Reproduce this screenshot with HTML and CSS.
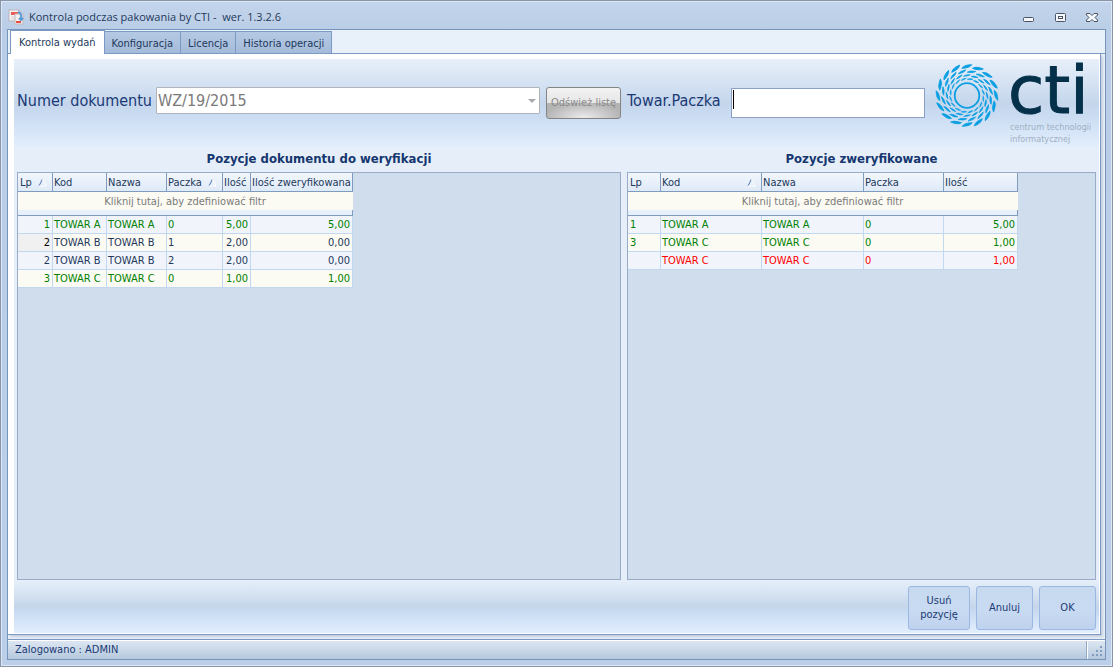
FILE: index.html
```html
<!DOCTYPE html>
<html lang="pl">
<head>
<meta charset="utf-8">
<title>Kontrola podczas pakowania by CTI</title>
<link rel="stylesheet" href="styles.css">
</head>
<body>
<div class="window">
  <header class="titlebar">
    <svg class="app-icon" width="16" height="16" viewBox="0 0 16 16">
      <rect x="1" y="1" width="10" height="11" fill="#f4f4f6" stroke="#b9b4b8"/>
      <rect x="3" y="3" width="7" height="3" fill="#ea5a52"/>
      <path d="M3 8h5M3 10h4" stroke="#d5cdd0"/>
      <rect x="7" y="5" width="8" height="10" fill="#f2eff0" stroke="#c3b9b9"/>
      <rect x="8" y="12" width="5" height="2" fill="#ee4b44"/>
      <path d="M10 3q4 1 3 7M11 9l2 2 2-2" fill="none" stroke="#5b9bd5" stroke-width="2"/>
    </svg>
    <span class="title">Kontrola podczas pakowania by CTI -&nbsp; wer. 1.3.2.6</span>
    <button class="win-btn" aria-label="Minimalizuj"><svg width="12" height="12" viewBox="0 0 12 12"><rect x="1.500" y="6.500" width="10" height="4" rx="1" fill="#f4f7fb" stroke="#4a5263"/></svg></button>
    <button class="win-btn" aria-label="Maksymalizuj"><svg width="12" height="12" viewBox="0 0 12 12"><rect x="1.500" y="2.500" width="10" height="8" rx="1" fill="#f4f7fb" stroke="#4a5263"/><rect x="4.500" y="5.500" width="4" height="2" fill="#fff" stroke="#4a5263"/></svg></button>
    <button class="win-btn" aria-label="Zamknij"><svg width="12" height="12" viewBox="0 0 12 12"><path d="M.5 2.500h3.500l2 2 2-2h3.500v1.500L9 6.500 11.500 9v1.500H8l-2-2-2 2H.5V9L3 6.500.5 4z" fill="#f4f7fb" stroke="#4a5263"/></svg></button>
  </header>

  <div class="frame">
    <nav class="tabs" role="tablist">
      <button class="tab tab-active" role="tab" aria-selected="true">Kontrola wydań</button>
      <button class="tab" role="tab">Konfiguracja</button>
      <button class="tab" role="tab">Licencja</button>
      <button class="tab" role="tab">Historia operacji</button>
    </nav>

    <main class="page">
      <section class="top">
        <div class="field-group">
          <label class="big-label" for="doc">Numer dokumentu</label>
          <div class="combo">
            <select id="doc" disabled><option>WZ/19/2015</option></select>
          </div>
          <button class="refresh" disabled>Odśwież listę</button>
        </div>
        <div class="field-group">
          <label class="big-label" for="item">Towar.Paczka</label>
          <div class="entry"><input id="item" type="text"></div>
          <svg class="logo" width="160" height="82" viewBox="0 0 160 82" role="img" aria-label="cti">
            <defs>
              <g id="sector" fill="#0c9fe2" stroke="#0c9fe2" stroke-linejoin="round">
                <path stroke-width=".9" d="M-5.200-27.200Q-3-30.800 4.800-30.800Q2.500-27.400-5.200-27.200z"/>
                <path stroke-width=".7" transform="rotate(11)" d="M-4.200-22.900Q-2-25.500 4-25.300Q2-22.900-4.200-22.900z"/>
                <path stroke-width=".6" d="M-3.500-19.200Q-1.500-21.300 3.400-20.900Q1.500-19.100-3.500-19.200z"/>
                <path stroke-width=".5" transform="rotate(11)" d="M-2.900-15.900Q-1-17.700 2.800-17.200Q1-15.600-2.900-15.900z"/>
              </g>
            </defs>
            <g transform="translate(31 31.500)">
              <use href="#sector"/>
              <use href="#sector" transform="rotate(22.500)"/>
              <use href="#sector" transform="rotate(45)"/>
              <use href="#sector" transform="rotate(67.500)"/>
              <use href="#sector" transform="rotate(90)"/>
              <use href="#sector" transform="rotate(112.500)"/>
              <use href="#sector" transform="rotate(135)"/>
              <use href="#sector" transform="rotate(157.500)"/>
              <use href="#sector" transform="rotate(180)"/>
              <use href="#sector" transform="rotate(202.500)"/>
              <use href="#sector" transform="rotate(225)"/>
              <use href="#sector" transform="rotate(247.500)"/>
              <use href="#sector" transform="rotate(270)"/>
              <use href="#sector" transform="rotate(292.500)"/>
              <use href="#sector" transform="rotate(315)"/>
              <use href="#sector" transform="rotate(337.500)"/>
              <circle r="12.300" fill="none" stroke="#0c9fe2" stroke-width="1.800"/>
            </g>
            <text class="logo-name" x="72" y="49">cti</text>
            <text class="logo-sub" x="74" y="66">centrum technologii</text>
            <text class="logo-sub" x="74" y="78">informatycznej</text>
          </svg>
        </div>
      </section>

      <section class="lists">
        <div class="list">
          <h2>Pozycje dokumentu do weryfikacji</h2>
          <div class="panel">
            <table class="grid grid-doc">
              <colgroup><col class="w35"><col class="w54"><col class="w60"><col class="w56"><col class="w28"><col class="w102"></colgroup>
              <thead>
                <tr><th><span class="th">Lp <svg class="sort" width="9" height="9" viewBox="0 0 9 9"><path d="M1 8L4.500 1" stroke="#4f74b5"/><path d="M4.500 1L8 8H1" fill="none" stroke="#fff"/></svg></span></th><th>Kod</th><th>Nazwa</th><th><span class="th">Paczka <svg class="sort" width="9" height="9" viewBox="0 0 9 9"><path d="M1 8L4.500 1" stroke="#4f74b5"/><path d="M4.500 1L8 8H1" fill="none" stroke="#fff"/></svg></span></th><th>Ilość</th><th>Ilość zweryfikowana</th></tr>
                <tr class="filter"><td colspan="6">Kliknij tutaj, aby zdefiniować filtr</td></tr>
                <tr class="strip"><td colspan="6"></td></tr>
              </thead>
              <tbody>
                <tr class="ok"><td class="num">1</td><td>TOWAR A</td><td>TOWAR A</td><td>0</td><td class="num">5,00</td><td class="num">5,00</td></tr>
                <tr><td class="num current">2</td><td>TOWAR B</td><td>TOWAR B</td><td>1</td><td class="num">2,00</td><td class="num">0,00</td></tr>
                <tr><td class="num">2</td><td>TOWAR B</td><td>TOWAR B</td><td>2</td><td class="num">2,00</td><td class="num">0,00</td></tr>
                <tr class="ok"><td class="num">3</td><td>TOWAR C</td><td>TOWAR C</td><td>0</td><td class="num">1,00</td><td class="num">1,00</td></tr>
              </tbody>
            </table>
          </div>
        </div>
        <div class="list">
          <h2>Pozycje zweryfikowane</h2>
          <div class="panel">
            <table class="grid grid-done">
              <colgroup><col class="w33"><col class="w101"><col class="w102"><col class="w80"><col class="w74"></colgroup>
              <thead>
                <tr><th>Lp</th><th><span class="th">Kod <svg class="sort" width="9" height="9" viewBox="0 0 9 9"><path d="M1 8L4.500 1" stroke="#4f74b5"/><path d="M4.500 1L8 8H1" fill="none" stroke="#fff"/></svg></span></th><th>Nazwa</th><th>Paczka</th><th>Ilość</th></tr>
                <tr class="filter"><td colspan="5">Kliknij tutaj, aby zdefiniować filtr</td></tr>
                <tr class="strip"><td colspan="5"></td></tr>
              </thead>
              <tbody>
                <tr class="ok"><td>1</td><td>TOWAR A</td><td>TOWAR A</td><td>0</td><td class="num">5,00</td></tr>
                <tr class="ok"><td>3</td><td>TOWAR C</td><td>TOWAR C</td><td>0</td><td class="num">1,00</td></tr>
                <tr class="bad"><td></td><td>TOWAR C</td><td>TOWAR C</td><td>0</td><td class="num">1,00</td></tr>
              </tbody>
            </table>
          </div>
        </div>
      </section>

      <footer class="actions">
        <button class="action action-wide">Usuń<br>pozycję</button>
        <button class="action">Anuluj</button>
        <button class="action">OK</button>
      </footer>
    </main>

    <div class="status">
      <span>Zalogowano : ADMIN</span>
      <svg class="grip" width="18" height="18" viewBox="0 0 18 18">
        <path d="M.5 0v18" stroke="#8fa8c8"/><path d="M1.500 0v18" stroke="#fff"/>
        <path d="M14 5h2v2h-2zM10 9h2v2h-2zM14 9h2v2h-2zM6 13h2v2H6zM10 13h2v2h-2zM14 13h2v2h-2z" fill="#7f9bc2"/>
      </svg>
    </div>
  </div>
</div>
</body>
</html>
```
FILE: styles.css
```css
* { box-sizing: border-box; }

body {
  margin: 0;
  color: #1e395b;
  font: 11px/14px "DejaVu Sans Condensed", "DejaVu Sans", sans-serif;
}

button, input, select { font: inherit; color: inherit; margin: 0; }

.window {
  display: flex;
  flex-direction: column;
  min-height: 100vh;
  padding: 0 6px 6px;
  border: 1px solid #8a95a8;
  box-shadow: inset 1px 1px #dce8f6, inset -1px -1px #dce8f6;
  background: linear-gradient(#c4d5ec, #b9cde6 30px, #bbcfe8);
}

/* Title bar */
.titlebar { display: flex; align-items: center; height: 28px; padding: 3px 8px 0 1px; }
.title { flex: 1; margin-left: 5px; font: 11px/16px "Open Sans", sans-serif; color: #1e395b; }
.win-btn { width: 12px; height: 16px; margin-left: 20px; padding: 0; border: 0; background: none; }
.win-btn svg { display: block; }

.frame {
  flex: 1;
  display: flex;
  flex-direction: column;
  border: 1px solid #7794bb;
  background: #e8f0f9;
}

/* Tabs */
.tabs { display: flex; align-items: flex-end; height: 24px; padding-left: 2px; border-bottom: 1px solid #7b99c2; }
.tab {
  height: 22px;
  padding: 3px 7px 0;
  border: 1px solid #7b99c2;
  border-left: 0;
  border-bottom: 0;
  background: linear-gradient(#b5c9e4, #a4bbd9);
  white-space: nowrap;
}
.tab-active {
  height: 24px;
  padding: 0 8px;
  border-left: 1px solid #7b99c2;
  margin-bottom: -1px;
  background: #fff;
}

/* Tab page */
.page {
  flex: 1;
  display: flex;
  flex-direction: column;
  margin-right: 4px;
  padding: 5px 1px 1px 6px;
  border: solid #7b99c2;
  border-width: 0 1px 1px 0;
  background: #fff;
  box-shadow: 2px 2px 2px #c6d0de;
}

.top, .lists {
  display: grid;
  grid-template-columns: 604fr 469fr;
  column-gap: 6px;
  padding: 0 3px;
}
.top {
  height: 88px;
  background: linear-gradient(#e8effa, #d3e1f2 30%, #c5d6ec 50%, #c9dbf1 62%, #e2eefd);
}
.field-group { display: flex; align-items: center; min-width: 0; }
.big-label { font-size: 16px; line-height: 20px; color: #1b3a75; white-space: nowrap; margin-bottom: 4px; }

.combo { position: relative; flex: 1; margin: 0 6px 5px 4px; }
.combo select {
  display: block;
  width: 100%;
  height: 27px;
  padding: 0 20px 0 1px;
  border: 1px solid #b1b5ba;
  border-radius: 1px;
  appearance: none;
  background: #fff;
  color: #7a7a7a;
  font-size: 16px;
  opacity: 1;
}
.combo::after {
  content: "";
  position: absolute;
  right: 4px;
  top: 12px;
  border: 4px solid transparent;
  border-top-color: #a7a9ac;
  border-bottom: 0;
}
.refresh {
  width: 75px;
  height: 32px;
  padding: 0;
  border: 1px solid #848484;
  border-radius: 3px;
  background:
    linear-gradient(#f3f3f3, #e6e6e6) top / 100% 50% no-repeat,
    radial-gradient(ellipse at 50% 100%, #ececec, #b4b4b4 75%) bottom / 100% 50% no-repeat;
  color: #8b8b8b;
  white-space: nowrap;
}
.entry { position: relative; flex: 1; margin: 0 11px 0 10px; }
.entry input {
  display: block;
  width: 100%;
  height: 30px;
  padding: 0 4px;
  border: 1px solid #8ba0c4;
  background: #fff;
  font-size: 16px;
}
.entry::before { content: ""; position: absolute; left: 2px; top: 2px; width: 1px; height: 19px; background: #000; }

.logo { flex: none; align-self: flex-start; margin-top: 5px; overflow: visible; }
.logo-name { font: 66px "DejaVu Sans", sans-serif; fill: #04304a; stroke: #04304a; stroke-width: 1; }
.logo-sub { font: 9px "DejaVu Sans Condensed", "DejaVu Sans", sans-serif; fill: #9fb0c4; }

/* Lists */
.lists { flex: 1; background: #e6eff9; }
.list { display: flex; flex-direction: column; min-width: 0; }
.list h2 { margin: 0; padding: 2px 0 3px; font-size: 13px; line-height: 20px; text-align: center; color: #15366f; }
.panel { flex: 1; border: 1px solid #98acca; background: #cfdded; }

.grid { table-layout: fixed; border-spacing: 0; }
.grid-doc { width: 335px; }
.grid-done { width: 390px; }
.w28 { width: 28px; }
.w33 { width: 33px; }
.w35 { width: 35px; }
.w54 { width: 54px; }
.w56 { width: 56px; }
.w60 { width: 60px; }
.w74 { width: 74px; }
.w80 { width: 80px; }
.w101 { width: 101px; }
.w102 { width: 102px; }

.grid th, .grid td { padding: 0 2px 0 1px; line-height: 17px; white-space: nowrap; }
.grid th {
  height: 19px;
  padding: 1px 0 0 1px;
  border-right: 1px solid #7f9bc0;
  border-bottom: 1px solid #7f9bc0;
  background: linear-gradient(#f1f6fc, #dfeaf8);
  text-align: left;
  font-weight: normal;
}
.grid th:first-child { padding-left: 2px; }
.th { display: flex; align-items: center; justify-content: space-between; padding-right: 5px; }
.grid tbody td {
  height: 18px;
  padding-top: 1px;
  border-right: 1px solid #c1d8f0;
  border-bottom: 1px solid #c1d8f0;
  background: #f1f5fb;
  line-height: 16px;
}
.grid tbody td:first-child { padding-left: 2px; }
.grid tbody tr:nth-child(even) td { background: #fcfbf3; }
.grid tbody td.current, .grid tbody tr:nth-child(even) td.current { background: #f0f0f0; color: #000; }
.grid .filter td { height: 18px; background: #fcfbf3; color: #7a7a7a; text-align: center; }
.grid .strip td { height: 6px; line-height: 0; border-right: 1px solid #7f9bc0; border-bottom: 1px solid #7f9bc0; background: #e8f1fb; }
.grid .num { text-align: right; }
.ok { color: #008000; }
.bad { color: #f00; }

/* Actions */
.actions {
  display: flex;
  justify-content: flex-end;
  gap: 6px;
  padding: 6px 3px 3px;
  background: linear-gradient(#e6effa, #d3e1f1 30%, #c5d6ea 50%, #cadcf3 62%, #e2eefd);
}
.action {
  width: 57px;
  height: 44px;
  padding: 0;
  border: 1px solid #9cb8e2;
  border-radius: 3px;
  background: linear-gradient(#c6d9ee, #c9dbf2 50%, #bfd2ee);
  color: #1b3a75;
}
.action-wide { width: 62px; }

/* Status bar */
.status {
  display: flex;
  align-items: center;
  justify-content: space-between;
  height: 20px;
  margin-top: 4px;
  padding: 1px 1px 0 7px;
  border-top: 1px solid #7b99c2;
  box-shadow: inset 0 1px #fff;
  background: linear-gradient(#dfe8f3, #b5c8dd);
  color: #1b3a75;
}
```
